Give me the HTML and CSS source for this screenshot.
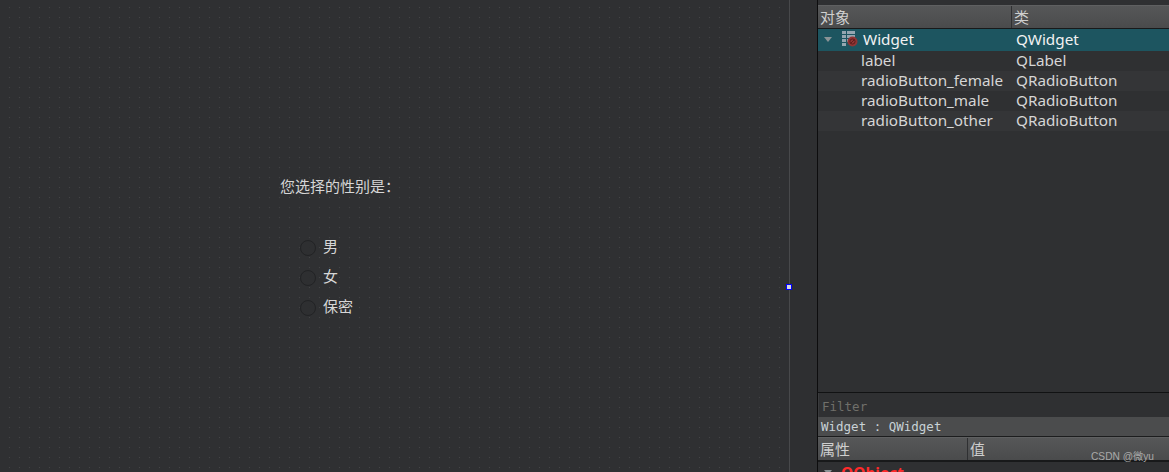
FILE: index.html
```html
<!DOCTYPE html>
<html lang="zh-CN">
<head>
    <meta charset="UTF-8">
    <title>Widget</title>
    <link rel="stylesheet" href="styles.css">
</head>
<body>
    <div class="form-canvas">
        <div class="form-label">您选择的性别是：</div>
        <div class="form-radio radio-male"><span class="radio-dot"></span>男</div>
        <div class="form-radio radio-female"><span class="radio-dot"></span>女</div>
        <div class="form-radio radio-other"><span class="radio-dot"></span>保密</div>
        <div class="resize-handle"></div>
    </div>

    <div class="gutter"></div>

    <div class="side-panel">
        <div class="top-gap"></div>
        <div class="table-head">
            <div class="head-cell head-object">对象</div>
            <div class="head-cell">类</div>
        </div>
        <div class="tree">
            <div class="tree-row tree-selected">
                <div class="col-object col-root">
                    <span class="arrow"></span>
                    <svg class="widget-icon" width="16" height="16" viewBox="0 0 16 16">
                        <path d="M0 0h4v3H0zM5 0h8v3H5zM0 4h4v3H0zM5 4h8v3H5zM0 8h4v3H0zM5 8h1v3H5zM0 12h4v3H0z" fill="#94a6b0"/>
                        <circle cx="10.5" cy="10.5" r="5" fill="#8f3535"/>
                        <circle cx="10.5" cy="10.5" r="2.6" fill="none" stroke="#5e1c1c"/>
                        <path d="M8.5 12.5l4-4" stroke="#5e1c1c"/>
                    </svg>
                    <span>Widget</span>
                </div>
                <div class="col-class">QWidget</div>
            </div>
            <div class="tree-row">
                <div class="col-object">label</div>
                <div class="col-class">QLabel</div>
            </div>
            <div class="tree-row tree-alt">
                <div class="col-object">radioButton_female</div>
                <div class="col-class">QRadioButton</div>
            </div>
            <div class="tree-row">
                <div class="col-object">radioButton_male</div>
                <div class="col-class">QRadioButton</div>
            </div>
            <div class="tree-row tree-alt">
                <div class="col-object">radioButton_other</div>
                <div class="col-class">QRadioButton</div>
            </div>
        </div>
        <div class="filter">Filter</div>
        <div class="class-bar">Widget : QWidget</div>
        <div class="table-head prop-head">
            <div class="head-cell head-prop">属性</div>
            <div class="head-cell">值</div>
        </div>
        <div class="prop-row">
            <span class="arrow prop-arrow"></span>
            <span class="prop-group">QObject</span>
        </div>
    </div>

    <div class="watermark">CSDN @微yu</div>
</body>
</html>
```

FILE: styles.css
```css
* {
    box-sizing: border-box;
}

html, body {
    height: 472px;
    overflow: hidden;
}

body {
    margin: 0;
    display: flex;
    position: relative;
    background-color: #2f3032;
    color: #d6d6d6;
    font-family: "Noto Sans", "Noto Sans CJK SC", sans-serif;
    font-size: 15.25px;
}

/* form canvas with the designer dot grid */
.form-canvas {
    position: relative;
    width: 789px;
    background-color: #2f3032;
    background-image: radial-gradient(circle at 0.5px 0.5px, #444547 0.6px, transparent 0.8px);
    background-size: 10px 10px;
    background-position: 9px 7px;
}

.form-label {
    position: absolute;
    left: 280px;
    top: 176px;
    font-family: "Noto Sans CJK SC", sans-serif;
    font-size: 15px;
    line-height: 20px;
    white-space: nowrap;
}

.form-radio {
    position: absolute;
    left: 300px;
    display: flex;
    align-items: flex-start;
    gap: 7px;
    height: 20px;
    font-family: "Noto Sans CJK SC", sans-serif;
    font-size: 15px;
    line-height: 20px;
}

.radio-male { top: 236px; }
.radio-female { top: 266px; }
.radio-other { top: 296px; }

.radio-dot {
    width: 16px;
    height: 16px;
    margin-top: 4px;
    border: 1px solid #222325;
    border-radius: 50%;
    background-color: #2e2f31;
}

.resize-handle {
    position: absolute;
    right: -3px;
    top: 284px;
    width: 6px;
    height: 6px;
    background-color: #d8d8e0;
    border: 1px solid #0000ff;
}

.gutter {
    width: 29px;
    border-left: 1px solid #48494b;
    border-right: 1px solid #0d0d0e;
    background-color: #2e2f31;
}

.side-panel {
    flex: 1;
    display: flex;
    flex-direction: column;
    min-width: 0;
    height: 472px;
    overflow: hidden;
}

.top-gap {
    height: 5px;
    flex-shrink: 0;
    background-color: #2f3032;
}

.table-head {
    display: flex;
    flex-shrink: 0;
    height: 24px;
    background: linear-gradient(#565758, #4a4b4c);
    border-top: 1px solid #5f6061;
    border-bottom: 1px solid #18191a;
    font-family: "Noto Sans CJK SC", sans-serif;
    font-size: 15px;
    line-height: 22px;
    color: #cfcfcf;
}

.head-cell {
    padding-left: 2px;
}

.head-object {
    width: 194px;
    border-right: 1px solid #2f3032;
}

.head-prop {
    width: 150px;
    border-right: 1px solid #2f3032;
}

.tree {
    flex: none;
    height: 364px;
    border-bottom: 1px solid #111213;
}

.tree-row {
    display: flex;
    align-items: center;
    height: 20px;
    padding-bottom: 2px;
    line-height: 19px;
}

.tree-selected {
    height: 22px;
    background-color: #1d5560;
    color: #f2f2f2;
}

.tree-alt {
    background-color: #343537;
}

.col-object {
    width: 198px;
    padding-left: 43px;
    white-space: nowrap;
}

.col-root {
    display: flex;
    align-items: center;
    padding-left: 6px;
}

.col-class {
    white-space: nowrap;
}

.arrow {
    width: 0;
    height: 0;
    border-left: 4px solid transparent;
    border-right: 4px solid transparent;
    border-top: 5px solid #8a9396;
}

.widget-icon {
    margin-left: 10px;
    margin-right: 5px;
}

.filter {
    flex-shrink: 0;
    height: 24px;
    padding-left: 3px;
    border-left: 1px solid #3a3b3d;
    line-height: 27px;
    background-color: #2f3032;
    color: #6f6f6a;
    font-family: "DejaVu Sans Mono", monospace;
    font-size: 12.5px;
}

.class-bar {
    flex-shrink: 0;
    height: 20px;
    padding-left: 3px;
    line-height: 19px;
    background-color: #4b4c4d;
    border-bottom: 1px solid #1c1d1e;
    color: #c8d2d6;
    font-family: "DejaVu Sans Mono", monospace;
    font-size: 12.5px;
}

.prop-row {
    display: flex;
    flex-shrink: 0;
    align-items: center;
    gap: 9px;
    height: 22px;
    padding-left: 6px;
    border-top: 1px solid #18191a;
}

.prop-group {
    color: #ff2a2a;
    font-size: 15.5px;
    font-weight: bold;
}

.watermark {
    position: absolute;
    left: 1091px;
    top: 448px;
    font-family: "Liberation Sans", "Noto Sans CJK SC", sans-serif;
    font-size: 10.2px;
    color: #a9a9a9;
    white-space: nowrap;
}
```
